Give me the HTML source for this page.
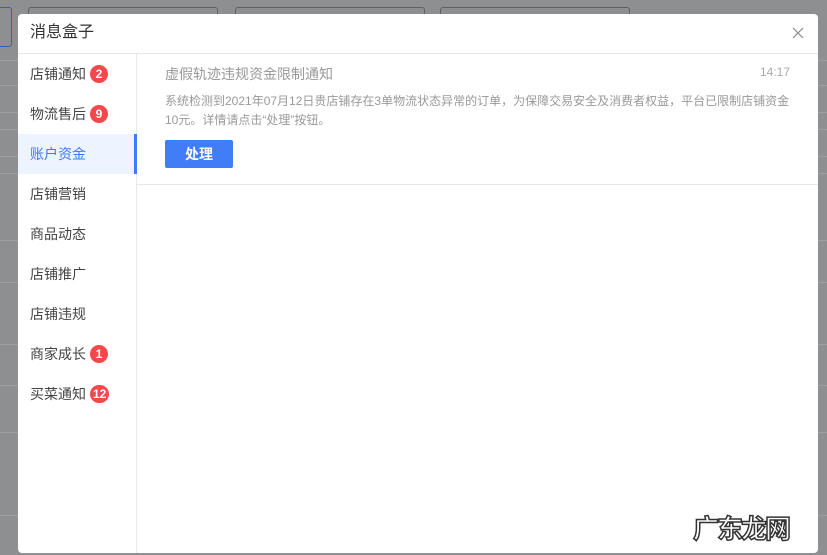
<!DOCTYPE html>
<html><head><meta charset="utf-8"><style>
*{margin:0;padding:0;box-sizing:border-box}
body{width:827px;height:555px;overflow:hidden;background:#8e8f91;font-family:"Liberation Sans","Noto Sans CJK SC",sans-serif;position:relative}
.bgbox{position:absolute;border:1px solid #5f6063;border-radius:3px;height:30px;top:7px}
.line{position:absolute;left:0;right:0;height:1px;background:#9e9fa1}
.modal{position:absolute;left:18px;top:14px;width:800px;height:539px;background:#fff;border-radius:4px;overflow:hidden}
.hd{height:40px;border-bottom:1px solid #e8e8e8;font-size:16px;color:#333;padding-left:12px;line-height:38px;position:relative}
.close{position:absolute;right:14px;top:13px;width:12px;height:12px}
.side{position:absolute;left:0;top:40px;width:119px;bottom:0;border-right:1px solid #e8e8e8}
.it{height:40px;line-height:40px;font-size:14px;color:#444;padding-left:12px;position:relative}
.it.on{background:#eef4ff;color:#3d7bf7}
.it.on:after{content:"";position:absolute;right:-1px;top:0;width:3px;height:40px;background:#3d7bf7}
.b{display:inline-block;background:#f5484a;color:#fff;border-radius:9px;min-width:18px;height:18px;line-height:18px;font-size:12px;text-align:center;padding:0 3px;vertical-align:1px;margin-left:4px;font-weight:bold}
.ct{position:absolute;left:119px;top:40px;right:0;height:131px;border-bottom:1px solid #e8e8e8}
.t{position:absolute;left:28px;top:10px;font-size:14px;color:#999}
.tm{position:absolute;right:28px;top:11px;font-size:12px;color:#aaa}
.d{position:absolute;left:28px;top:38px;width:630px;font-size:12px;color:#999;line-height:19px}
.btn{position:absolute;left:28px;top:86px;width:68px;height:28px;background:#3f7ef7;border-radius:2px;color:#fff;font-size:14px;text-align:center;line-height:28px;font-weight:bold}
.wm{position:absolute;left:693px;top:509px;font-size:26px;font-weight:bold;color:#fff;-webkit-text-stroke:1.5px #333;letter-spacing:-2px}
</style></head><body>
<div class="bgbox" style="left:-5px;width:17px;height:40px;border-color:#3d5fa8"></div>
<div class="bgbox" style="left:28px;width:190px"></div>
<div class="bgbox" style="left:235px;width:190px"></div>
<div class="bgbox" style="left:440px;width:190px"></div>
<div class="line" style="top:60px"></div>
<div class="line" style="top:85px"></div>
<div class="line" style="top:112px"></div>
<div class="line" style="top:129px"></div>
<div class="line" style="top:156px"></div>
<div class="line" style="top:173px"></div>
<div class="line" style="top:240px"></div>
<div class="line" style="top:282px"></div>
<div class="line" style="top:344px"></div>
<div class="line" style="top:385px"></div>
<div class="line" style="top:432px"></div>
<div class="line" style="top:515px"></div>
<div class="modal">
<div class="hd">消息盒子<svg class="close" viewBox="0 0 12 12"><path d="M1 1L11 11M11 1L1 11" stroke="#888" stroke-width="1.2"/></svg></div>
<div class="side">
<div class="it">店铺通知<span class="b">2</span></div>
<div class="it">物流售后<span class="b">9</span></div>
<div class="it on">账户资金</div>
<div class="it">店铺营销</div>
<div class="it">商品动态</div>
<div class="it">店铺推广</div>
<div class="it">店铺违规</div>
<div class="it">商家成长<span class="b">1</span></div>
<div class="it">买菜通知<span class="b">12</span></div>
</div>
<div class="ct">
<div class="t">虚假轨迹违规资金限制通知</div>
<div class="tm">14:17</div>
<div class="d">系统检测到2021年07月12日贵店铺存在3单物流状态异常的订单，为保障交易安全及消费者权益，平台已限制店铺资金10元。详情请点击“处理”按钮。</div>
<div class="btn">处理</div>
</div>
</div>
<div class="wm">广东龙网</div>
</body></html>
